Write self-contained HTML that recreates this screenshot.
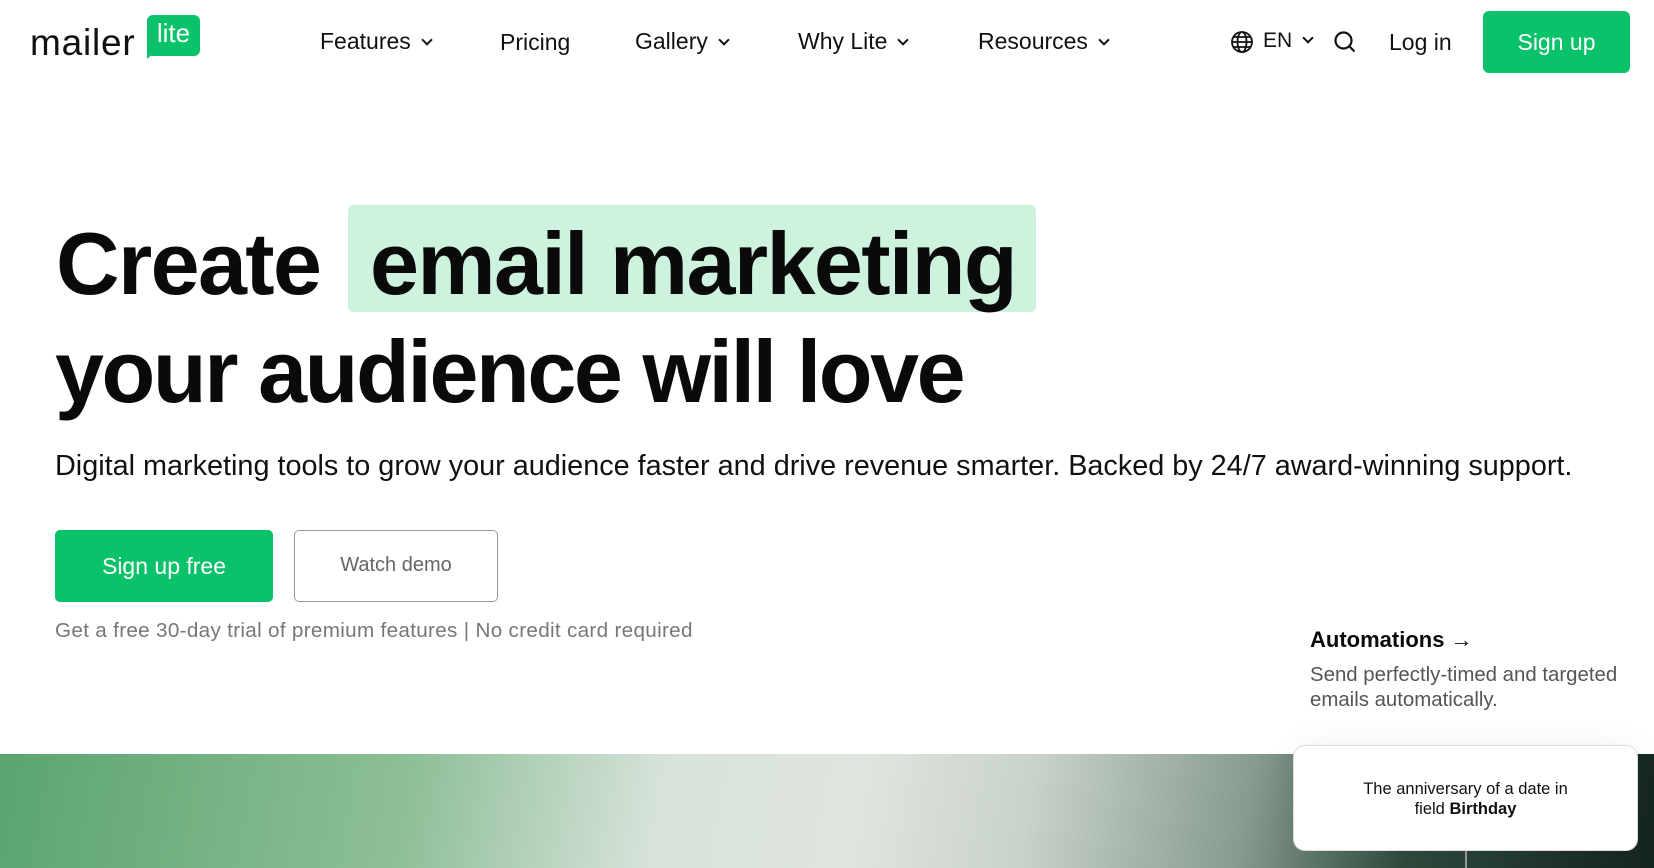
<!DOCTYPE html>
<html><head><meta charset="utf-8"><style>
*{margin:0;padding:0;box-sizing:border-box}
body{width:1654px;height:868px;overflow:hidden;background:#fff;font-family:"Liberation Sans",sans-serif;color:#0a0a0a;position:relative}
.a{position:absolute;white-space:nowrap}
.nav{font-size:23px;color:#111}
.chev{display:inline-block;width:8px;height:8px;border-right:2px solid #111;border-bottom:2px solid #111;transform:rotate(45deg);margin-left:12px;position:relative;top:-5px}
h1{font-size:88px;font-weight:bold;letter-spacing:-1.6px;line-height:1}
</style></head><body>
<div class="a" style="left:30px;top:22px;font-size:37px;letter-spacing:0.8px;color:#111">mailer</div>
<div class="a" style="left:147px;top:15px;width:53px;height:41px;background:#09c269;border-radius:6px;color:#fff;font-size:26px;text-align:center;line-height:36px">lite</div>
<div class="a" style="left:147px;top:50px;width:0;height:0;border-top:9px solid #09c269;border-right:10px solid transparent"></div>

<div class="a nav" style="left:320px;top:28px">Features<span class="chev"></span></div>
<div class="a nav" style="left:500px;top:29px">Pricing</div>
<div class="a nav" style="left:635px;top:28px">Gallery<span class="chev"></span></div>
<div class="a nav" style="left:798px;top:28px">Why Lite<span class="chev"></span></div>
<div class="a nav" style="left:978px;top:28px">Resources<span class="chev"></span></div>
<svg class="a" style="left:1230px;top:30px" width="24" height="24" viewBox="0 0 24 24" fill="none" stroke="#111" stroke-width="1.8"><circle cx="12" cy="12" r="10"/><ellipse cx="12" cy="12" rx="4.5" ry="10"/><path d="M2 12h20M4 7h16M4 17h16"/></svg>
<div class="a nav" style="left:1263px;top:29px;font-size:21px">EN<span class="chev"></span></div>
<svg class="a" style="left:1333px;top:30px" width="24" height="24" viewBox="0 0 24 24" fill="none" stroke="#111" stroke-width="2.2"><circle cx="10.5" cy="10.5" r="8"/><path d="M16.5 16.5l5 5"/></svg>
<div class="a nav" style="left:1389px;top:29px">Log in</div>
<div class="a" style="left:1483px;top:11px;width:147px;height:62px;background:#09c269;border-radius:6px;color:#fff;font-size:23px;text-align:center;line-height:62px">Sign up</div>

<div class="a" style="left:348px;top:205px;width:688px;height:107px;background:#cdf2de;border-radius:6px"></div>
<h1 class="a" style="left:56px;top:220px">Create</h1>
<h1 class="a" style="left:370px;top:220px">email marketing</h1>
<h1 class="a" style="left:55px;top:328px;letter-spacing:-2.4px">your audience will love</h1>

<div class="a" style="left:55px;top:450px;font-size:28.8px;color:#111">Digital marketing tools to grow your audience faster and drive revenue smarter. Backed by 24/7 award-winning support.</div>

<div class="a" style="left:55px;top:530px;width:218px;height:72px;background:#09c269;border-radius:5px;color:#fff;font-size:23px;text-align:center;line-height:72px">Sign up free</div>
<div class="a" style="left:294px;top:530px;width:204px;height:72px;border:1.5px solid #999;border-radius:5px;color:#666;font-size:20px;text-align:center;line-height:69px">Watch demo</div>
<div class="a" style="left:55px;top:619px;font-size:20.7px;color:#777;letter-spacing:0.3px">Get a free 30-day trial of premium features | No credit card required</div>

<div class="a" style="left:1310px;top:627px;font-size:22px;font-weight:bold">Automations →</div>
<div class="a" style="left:1310px;top:663px;font-size:20.4px;color:#555;line-height:25px">Send perfectly-timed and targeted<br>emails automatically.</div>

<div class="a" style="left:0;top:754px;width:1654px;height:114px;background:linear-gradient(100deg,#5aa56e 0%,#8fbf98 25%,#d7e3da 40%,#dfe4df 52%,#c8d2ca 62%,#879c8f 75%,#2f4a3e 85%,#14251f 100%)"></div>
<div class="a" style="left:1465px;top:840px;width:2px;height:28px;background:#999"></div>
<div class="a" style="left:1293px;top:745px;width:345px;height:106px;background:#fff;border:1px solid #ddd;border-radius:12px;box-shadow:0 0 30px rgba(0,0,0,0.06);font-size:16.5px;text-align:center;padding-top:33px;line-height:20px;color:#111">The anniversary of a date in<br>field <b>Birthday</b></div>
</body></html>
